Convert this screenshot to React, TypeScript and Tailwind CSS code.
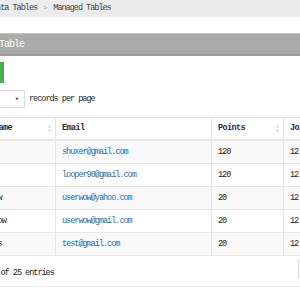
const rows = [
  { user: 'shuxer', email: 'shuxer@gmail.com', points: '120', joined: '12 Jun 2012' },
  { user: 'looper', email: 'looper90@gmail.com', points: '120', joined: '12.12.2011' },
  { user: 'userwow', email: 'userwow@yahoo.com', points: '20', joined: '12.12.2011' },
  { user: 'user1wow', email: 'userwow@gmail.com', points: '20', joined: '12.12.2011' },
  { user: 'testers', email: 'test@gmail.com', points: '20', joined: '12.12.2011' },
];

function SortIcon() {
  return (
    <svg width="5" height="9" viewBox="0 0 5 9" className="shrink-0">
      <path d="M2.5 0.5 L4.5 3.5 L0.5 3.5 Z" fill="#dcdcdc" />
      <path d="M2.5 8.5 L4.5 5.5 L0.5 5.5 Z" fill="#dcdcdc" />
    </svg>
  );
}

export default function App() {
  return (
    <div className="w-[300px] h-[294px] overflow-hidden bg-white font-['Liberation_Mono',monospace] text-[8.5px] tracking-[-1px] text-[#222]">
      {/* breadcrumb */}
      <div className="h-[17px] bg-[#ececec] flex items-center whitespace-nowrap text-[#444]">
        <span className="-ml-[8px]">Data Tables</span>
        <span className="ml-[6px] text-[#999] text-[7px]">&gt;</span>
        <span className="ml-[7px]">Managed Tables</span>
      </div>

      <div className="h-[16px]" />

      {/* portlet title */}
      <div className="h-[23px] bg-[#aaaaaa] border-t border-[#c4c4c4] border-b-2 border-b-[#9c9c9c] flex items-center whitespace-nowrap">
        <span className="-ml-[41px] text-white text-[10px] tracking-[-1px]">Managed Table</span>
      </div>

      {/* add button */}
      <div className="mt-[6px] h-[21px] flex">
        <button className="-ml-[56px] w-[60px] h-full bg-[#3fb54a] text-white">Add New</button>
      </div>

      {/* length select */}
      <div className="mt-[7px] h-[18px] flex items-center whitespace-nowrap">
        <div className="-ml-[25px] w-[50px] h-full border border-[#dcdcdc] flex items-center justify-end pr-[6px]">
          <span className="text-[7px] text-[#444]">▾</span>
        </div>
        <span className="ml-[4px]">records per page</span>
      </div>

      {/* table */}
      <div className="mt-[9px] -ml-[30px] w-[400px] border-t border-[#e6e6e6]">
        <div className="flex h-[23px] border-b-2 border-[#e8e8e8] font-bold tracking-[-0.6px] text-[#2b2b45]">
          <div className="w-[86px] border-r border-[#e6e6e6] flex items-center justify-between pl-[6px] pr-[3px]">
            <span>Username</span>
            <SortIcon />
          </div>
          <div className="w-[156px] border-r border-[#e6e6e6] flex items-center pl-[6px]">Email</div>
          <div className="w-[72px] border-r border-[#e6e6e6] flex items-center justify-between pl-[6px] pr-[3px]">
            <span>Points</span>
            <SortIcon />
          </div>
          <div className="flex-1 flex items-center pl-[6px]">Joined</div>
        </div>
        {rows.map((r, i) => (
          <div
            key={i}
            className={`flex h-[23px] border-b border-[#e6e6e6] ${i % 2 === 0 ? 'bg-[#f9f9f9]' : 'bg-white'}`}
          >
            <div className="w-[86px] border-r border-[#e6e6e6] flex items-center pl-[3px]">{r.user}</div>
            <div className="w-[156px] border-r border-[#e6e6e6] flex items-center pl-[6px] text-[#2a6fa5]">{r.email}</div>
            <div className="w-[72px] border-r border-[#e6e6e6] flex items-center pl-[6px]">{r.points}</div>
            <div className="flex-1 flex items-center pl-[6px]">{r.joined}</div>
          </div>
        ))}
      </div>

      {/* footer */}
      <div className="h-[31px] border-b border-[#ececec] flex whitespace-nowrap">
        <span className="-ml-[61px] mt-[11px]">Showing 1 to 5 of 25 entries</span>
        <div className="ml-auto -mr-[58px] mt-[4px] w-[60px] h-[18px] border border-[#dddddd] bg-white" />
      </div>
    </div>
  );
}
